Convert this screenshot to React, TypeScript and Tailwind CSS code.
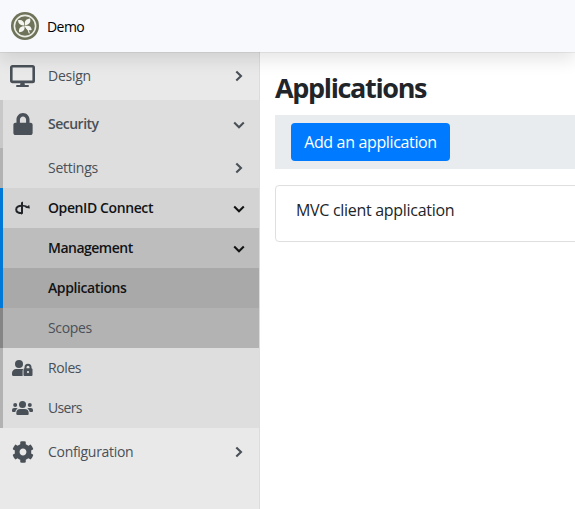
import React from "react";
import { FaCog, FaLock } from "react-icons/fa";

function Logo() {
  return (
    <svg className="h-7 w-7 shrink-0" viewBox="0 0 28 28" fill="none">
      <circle cx="14" cy="14" r="14" fill="#6f7359" />
      <circle cx="14" cy="14" r="10.6" stroke="#eceee6" strokeWidth="1.6" />
      <g fill="#f5f6f1">
        <path d="M13.4 13.4C9.8 14 7.2 12 7 8.3c4-.9 6.4 1.2 6.4 5.1Z" />
        <path d="M14.2 13.2c-1.3-3.4.6-6.3 4.8-6.6 1.3 3.6-.8 6.4-4.8 6.6Z" />
        <path d="M13.5 14.3c.6 3.7-1.5 6-5.4 5.9-.6-3.8 1.2-6.1 5.4-5.9Z" />
        <path d="M14.4 14.1c3.700-1 6 .5 6.300 3.900-3.500 1-5.800-.3-6.300-3.900Z" />
      </g>
      <path d="M13.8 13.8c2.3 2 3.8 4.2 4.6 7.6" stroke="#f5f6f1" strokeWidth="1.2" />
    </svg>
  );
}

function Monitor() {
  return (
    <svg className="h-[22px] w-[25px]" viewBox="0 0 25 22" fill="none">
      <rect x="1.3" y="1.3" width="22.4" height="15.6" rx="1.2" stroke="#495057" strokeWidth="2.6" />
      <path d="M10.7 17h3.6l.6 3H18a1 1 0 0 1 0 2H7a1 1 0 0 1 0-2h3.1Z" fill="#495057" />
    </svg>
  );
}

function OpenId() {
  return (
    <svg className="h-[14px] w-[15px]" viewBox="0 0 15 14" fill="none">
      <path d="M7.200 4.800C3.600 4.600 1.200 6 1.200 8.400c0 2.300 2.200 3.700 6 3.700" stroke="#212529" strokeWidth="2" />
      <path d="M6 1.500 8 .4v12.200L6 13.700Z" fill="#212529" />
      <path d="M8 4.800c1.500 0 2.600.3 3.800 1" stroke="#212529" strokeWidth="1.600" />
      <path d="M14.200 4 14.900 7.400 10 6.700Z" fill="#212529" />
    </svg>
  );
}

function UserLock() {
  return (
    <svg className="h-4 w-[21px]" viewBox="0 0 21 16" fill="#495057">
      <circle cx="7" cy="4" r="4" />
      <path d="M4.2 9h5.6c.6 0 1 .1 1.4.3-.4.4-.6.9-.6 1.4V16H1.5A1.5 1.5 0 0 1 0 14.500v-1.300A4.200 4.200 0 0 1 4.200 9Z" />
      <path fillRule="evenodd" d="M12.500 8.300V7.200a3.500 3.500 0 0 1 7 0v1.100c.6.100 1 .6 1 1.200V15a1 1 0 0 1-1 1h-7a1 1 0 0 1-1-1V9.500c0-.6.4-1.100 1-1.200Zm2 0h3V7.200a1.500 1.500 0 0 0-3 0ZM16 11a1.100 1.100 0 1 0 0 2.200A1.100 1.100 0 0 0 16 11Z" />
    </svg>
  );
}

function Group() {
  return (
    <svg className="h-[14px] w-[21px]" viewBox="0 0 21 14" fill="#495057">
      <circle cx="10.500" cy="3.500" r="3.500" />
      <circle cx="3.200" cy="4.100" r="2" />
      <circle cx="17.800" cy="4.100" r="2" />
      <path d="M8.300 8h4.400a4 4 0 0 1 4 3.900v.9a1.200 1.200 0 0 1-1.200 1.200h-10a1.200 1.200 0 0 1-1.200-1.200v-.9A4 4 0 0 1 8.300 8Z" />
      <path d="M2.100 7h2.100c.7 0 1.200.2 1.600.6-1.300.7-2.200 1.900-2.500 3.400H1a1 1 0 0 1-1-1v-.9A2.100 2.100 0 0 1 2.100 7ZM18.900 7h-2.100c-.7 0-1.200.2-1.600.6 1.300.7 2.200 1.900 2.500 3.400H20a1 1 0 0 0 1-1v-.9A2.100 2.100 0 0 0 18.900 7Z" />
    </svg>
  );
}

function Chevron({ down, dark }: { down?: boolean; dark?: boolean }) {
  return (
    <svg className={`ml-auto h-3 w-3 shrink-0 ${down ? "mr-[14px] mt-px" : "mr-[15px]"} ${dark ? "text-[#111315]" : "text-[#495057]"}`} viewBox="0 0 12 12" fill="none" stroke="currentColor" strokeWidth="2.1">
      <path d={down ? "m1.200 3.600 4.800 4.600 4.800-4.600" : "m4.300 1.500 4.700 4.500-4.700 4.500"} />
    </svg>
  );
}

type RowProps = {
  label: string;
  row: string;
  text?: string;
  icon?: React.ReactNode;
  arrow?: React.ReactNode;
};

function Row({ label, row, text = "", icon, arrow }: RowProps) {
  return (
    <a className={`flex shrink-0 items-center border-l-[3px] ${row}`}>
      <span className="flex w-[39px] shrink-0 justify-center">{icon}</span>
      <span className={`ml-[6px] whitespace-nowrap text-[14px] leading-5 ${text}`}>{label}</span>
      {arrow}
    </a>
  );
}

export default function App() {
  return (
    <div className="flex h-[509px] w-full flex-col overflow-hidden bg-white font-['Open_Sans','Noto_Sans',sans-serif] text-[#212529]">
      <header className="z-10 flex h-[52px] shrink-0 items-center bg-[#f8f9fc] pl-[11px] shadow-[0_8px_16px_rgba(0,0,0,0.1),0_1px_0_rgba(0,0,0,0.06)]">
        <Logo />
        <span className="ml-2 text-[14px] tracking-[-0.55px] text-black">Demo</span>
      </header>
      <div className="flex min-h-0 flex-1">
        <nav className="flex w-[260px] shrink-0 flex-col border-r border-[#dcdcdc] bg-[#e9e9e9] text-[#495057]">
          <Row label="Design" row="h-12 border-transparent" text="tracking-[-0.25px]" icon={<Monitor />} arrow={<Chevron />} />
          <Row label="Security" row="h-12 border-[#c8c8c8] bg-[#dedede]" text="font-semibold tracking-[-0.5px]" icon={<FaLock size={22} />} arrow={<Chevron down />} />
          <Row label="Settings" row="h-10 border-[#b2b2b2] bg-[#dedede]" text="tracking-[-0.25px]" arrow={<Chevron />} />
          <Row label="OpenID Connect" row="h-10 border-[#0078d7] bg-[#d3d3d3]" text="font-semibold tracking-[-0.4px] text-[#111315]" icon={<OpenId />} arrow={<Chevron down dark />} />
          <Row label="Management" row="h-10 border-[#0078d7] bg-[#bdbdbd]" text="font-semibold tracking-[-0.5px] text-[#111315]" arrow={<Chevron down dark />} />
          <Row label="Applications" row="h-10 border-[#0078d7] bg-[#a9a9a9]" text="font-semibold tracking-[-0.4px] text-[#111315]" />
          <Row label="Scopes" row="h-10 border-[#858585] bg-[#b3b3b3]" text="tracking-[-0.35px]" />
          <Row label="Roles" row="h-10 border-[#b2b2b2] bg-[#dedede]" text="tracking-[-0.4px]" icon={<UserLock />} />
          <Row label="Users" row="h-10 border-[#b2b2b2] bg-[#dedede]" text="tracking-[-0.65px]" icon={<Group />} />
          <Row label="Configuration" row="h-12 border-transparent" text="tracking-[-0.3px]" icon={<FaCog size={22} />} arrow={<Chevron />} />
        </nav>
        <main className="min-w-0 flex-1 pl-[15px] pt-[19px]">
          <h1 className="h-[34px] whitespace-nowrap text-[27px] font-bold leading-[34px] tracking-[-1.35px]">Applications</h1>
          <div className="mt-[10px] flex h-[54px] items-center bg-[#e9ecef] pl-4">
            <button className="h-[38px] w-[159px] whitespace-nowrap rounded-[4px] bg-[#007bff] text-[16px] tracking-[-0.35px] text-white">Add an application</button>
          </div>
          <div className="-mr-2 mt-4 h-[57px] rounded-[4px] border border-[#dfdfdf] pl-5 pt-3 text-[16px] leading-6 tracking-[-0.3px]">MVC client application</div>
        </main>
      </div>
    </div>
  );
}
